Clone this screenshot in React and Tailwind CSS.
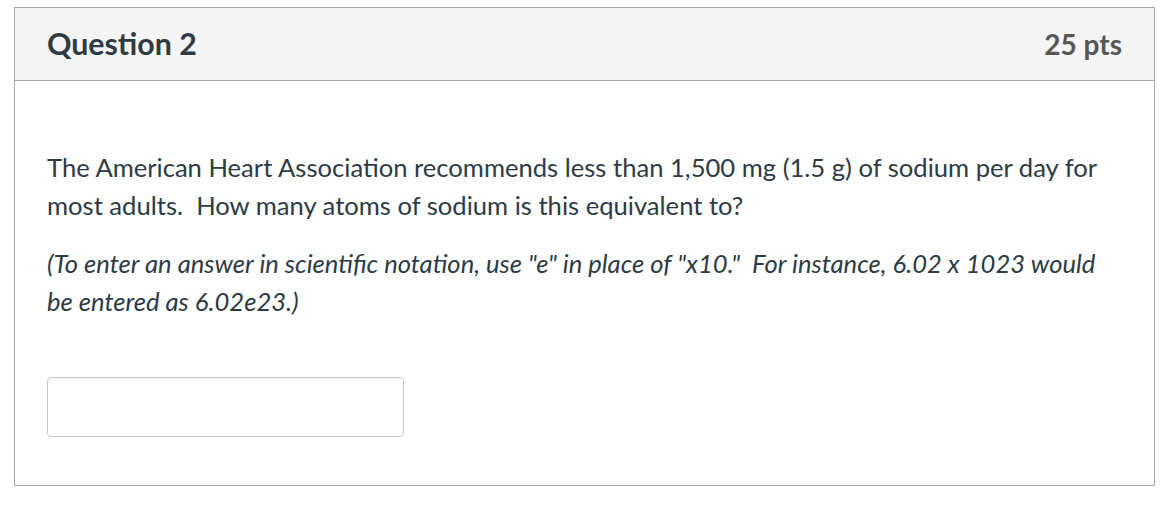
export default function App() {
  return (
    <div className="min-h-[528px] bg-white pt-[7px] pl-[14px] pr-[5px]" style={{ fontFamily: "Lato, 'Liberation Sans', sans-serif" }}>
      <div className="w-[1141px] border border-[#a9a9a9]">
        <div className="flex h-[73px] items-center justify-between border-b border-[#a9a9a9] bg-[#f5f5f5] pl-[32px] pr-[32px]">
          <h2 className="text-[30.3px] font-bold text-[#2d3b45]">Question 2</h2>
          <div className="text-[28px] font-bold text-[#565656]">25 pts</div>
        </div>
        <div className="px-[32px] pt-[67px] pb-[48px] text-[#2d3b45]">
          <p className="text-[25.6px] leading-[38px]">
            The American Heart Association recommends less than 1,500 mg (1.5 g) of sodium per day for most adults.&nbsp; How many atoms of sodium is this equivalent to?
          </p>
          <p className="mt-[20px] text-[25.6px] italic leading-[38px]">
            (To enter an answer in scientific notation, use "e" in place of "x10."&nbsp; For instance, 6.02 x 1023 would be entered as 6.02e23.)
          </p>
          <div className="mt-[57px]">
            <input
              type="text"
              className="h-[60px] w-[357px] rounded-[4px] border border-[#c7c7c7] bg-white shadow-[inset_0_1px_2px_rgba(0,0,0,0.06)] outline-none"
            />
          </div>
        </div>
      </div>
    </div>
  );
}
